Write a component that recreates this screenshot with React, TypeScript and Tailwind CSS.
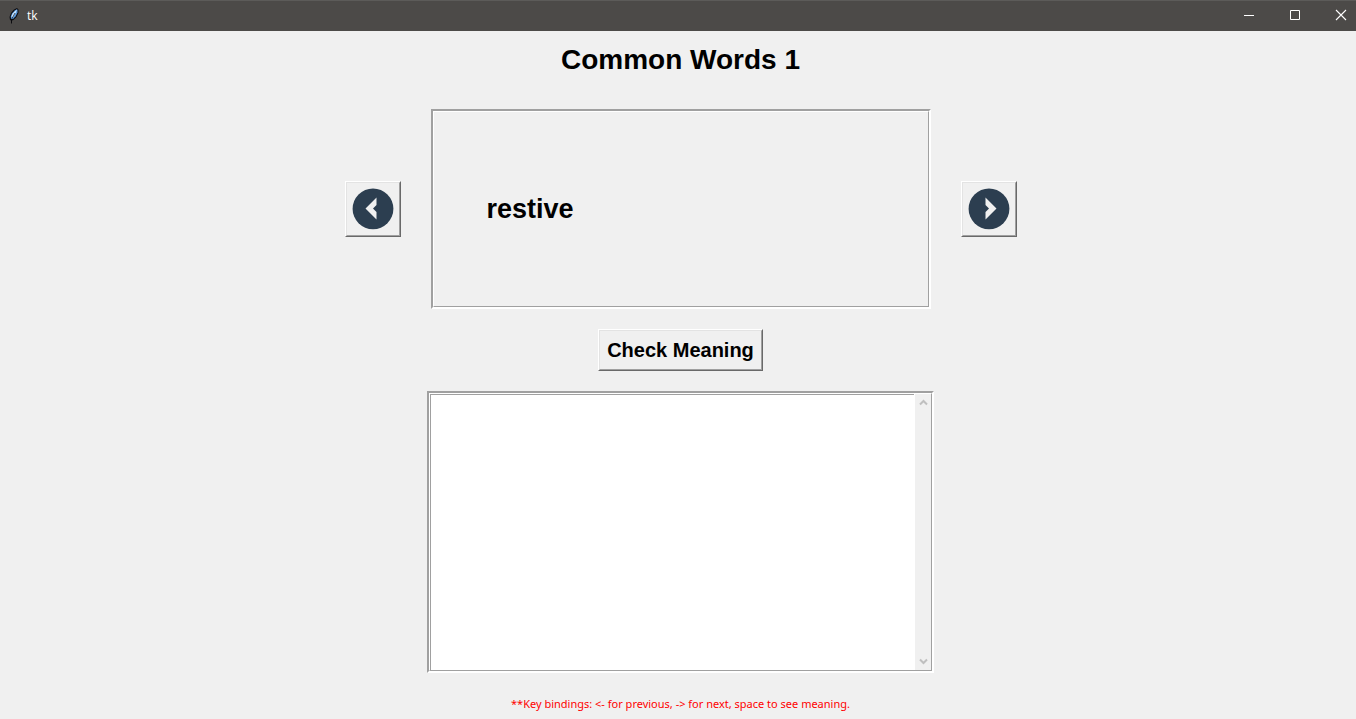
import { useEffect, useState } from "react";
import type { ReactNode } from "react";

const words = [{ word: "restive", meaning: "unable to stay still, quiet or patient" }];

const raised =
  "border border-t-white border-l-white border-r-[#696969] border-b-[#696969] bg-[#f0f0f0]";
const raisedInner =
  "border border-t-[#e3e3e3] border-l-[#e3e3e3] border-r-[#a0a0a0] border-b-[#a0a0a0]";

function Feather() {
  return (
    <svg className="h-4 w-3" viewBox="0 0 12 16" aria-hidden="true">
      <path d="M2 12L1.5 9L3 5L6 1.5L9 0L10.5 1.5V5L8.5 9L5.5 12L4 12.5L4 15.5H3V12.5Z" fill="#0c0c10" />
      <path d="M3 11L2.8 8.5L4 5.5L6.8 2.4L9 1.2L9.5 2V4.6L7.6 8.3L5 11Z" fill="#5a9be0" />
      <path d="M3.4 8.5L4.6 5.7L7.2 3L9 1.4L7.6 5L5 9.5Z" fill="#cfe8ff" />
      <path d="M3.5 15V11.5L7 5" fill="none" stroke="#0c0c10" strokeWidth="0.7" />
    </svg>
  );
}

function TitleButton({ label, children }: { label: string; children: ReactNode }) {
  return (
    <button type="button" aria-label={label} className="flex h-7 w-[46px] items-center justify-center">
      <svg className="h-3 w-3" viewBox="0 0 12 12" fill="none" stroke="#fff" aria-hidden="true">
        {children}
      </svg>
    </button>
  );
}

function NavButton({ label, flip, onClick }: { label: string; flip?: boolean; onClick: () => void }) {
  return (
    <button type="button" aria-label={label} onClick={onClick} className={raised}>
      <span className={`flex h-[54px] w-[54px] items-center justify-center ${raisedInner}`}>
        <svg className={flip ? "h-[42px] w-[42px] -scale-x-100" : "h-[42px] w-[42px]"} viewBox="0 0 42 42" aria-hidden="true">
          <circle cx="21" cy="20.8" r="20.4" fill="#2c3e50" />
          <path d="M13.5 20.5L24.5 9.5V17L21 20.5L24.5 24V31.5Z" fill="#f0f0f0" />
        </svg>
      </span>
    </button>
  );
}

function Groove({ className, children }: { className: string; children: ReactNode }) {
  return (
    <div className={`flex border-2 border-t-[#a0a0a0] border-r-white border-b-white border-l-[#a0a0a0] ${className}`}>
      <div className="flex min-w-0 flex-1 border border-t-white border-r-[#a0a0a0] border-b-[#a0a0a0] border-l-white">
        {children}
      </div>
    </div>
  );
}

function ScrollArrow({ label, path }: { label: string; path: string }) {
  return (
    <button type="button" aria-label={label} disabled className="flex h-[17px] w-4 items-center justify-center">
      <svg className="h-[7px] w-[9px]" viewBox="0 0 9 7" fill="none" stroke="#bfbfbf" strokeWidth="2" aria-hidden="true">
        <path d={path} />
      </svg>
    </button>
  );
}

export default function App() {
  const [index, setIndex] = useState(0);
  const [shown, setShown] = useState(false);

  const move = (step: number) => {
    setIndex((i) => (i + step + words.length) % words.length);
    setShown(false);
  };

  useEffect(() => {
    const onKey = (e: KeyboardEvent) => {
      if (e.key === "ArrowLeft") move(-1);
      if (e.key === "ArrowRight") move(1);
      if (e.key === " ") {
        e.preventDefault();
        setShown(true);
      }
    };
    window.addEventListener("keydown", onKey);
    return () => window.removeEventListener("keydown", onKey);
  }, []);

  return (
    <div className="flex min-h-screen flex-col bg-[#f0f0f0] font-['Liberation_Sans',Arial,sans-serif] text-black">
      <header className="flex h-[31px] items-center border-t border-[#5c5b59] bg-[#4c4a48] pl-2 text-white">
        <Feather />
        <span className="ml-[7px] flex-1 font-['Open_Sans',sans-serif] text-xs">tk</span>
        <div className="-mr-2 flex self-start">
          <TitleButton label="Minimize">
            <path d="M1 6.5H11" />
          </TitleButton>
          <TitleButton label="Maximize">
            <path d="M1.5 1.5H10.5V10.5H1.5Z" />
          </TitleButton>
          <TitleButton label="Close">
            <path d="M1 1L11 11M11 1L1 11" strokeWidth="1.1" />
          </TitleButton>
        </div>
      </header>

      <main className="flex flex-col items-center pl-[5px]">
        <h1 className="mt-[13px] text-[28px] leading-8 font-bold">Common Words 1</h1>

        <div className="mt-[33px] flex items-center gap-[30px]">
          <NavButton label="Previous" onClick={() => move(-1)} />
          <Groove className="h-[200px] w-[500px]">
            <p className="flex items-center pl-[53px] text-[27px] font-bold">{words[index].word}</p>
          </Groove>
          <NavButton label="Next" flip onClick={() => move(1)} />
        </div>

        <button type="button" onClick={() => setShown(true)} className={`mt-5 ${raised}`}>
          <span className={`flex h-10 items-center px-[7px] text-xl font-bold ${raisedInner}`}>Check Meaning</span>
        </button>

        <Groove className="mt-5 h-[282px] w-[507px]">
          <textarea
            aria-label="Meaning"
            readOnly
            value={shown ? words[index].meaning : ""}
            className="min-w-0 flex-1 resize-none border-t border-l border-[#a0a0a0] bg-white outline-none"
          />
          <div className="flex flex-col justify-between border-l border-white">
            <ScrollArrow label="Scroll up" path="M1 5.5L4.5 2L8 5.5" />
            <ScrollArrow label="Scroll down" path="M1 1.5L4.5 5L8 1.5" />
          </div>
        </Groove>

        <p className="mt-[23px] font-['Noto_Sans',sans-serif] text-[11px] leading-4 text-[#ff0000]">
          **Key bindings: &lt;- for previous, -&gt; for next, space to see meaning.
        </p>
      </main>
    </div>
  );
}
